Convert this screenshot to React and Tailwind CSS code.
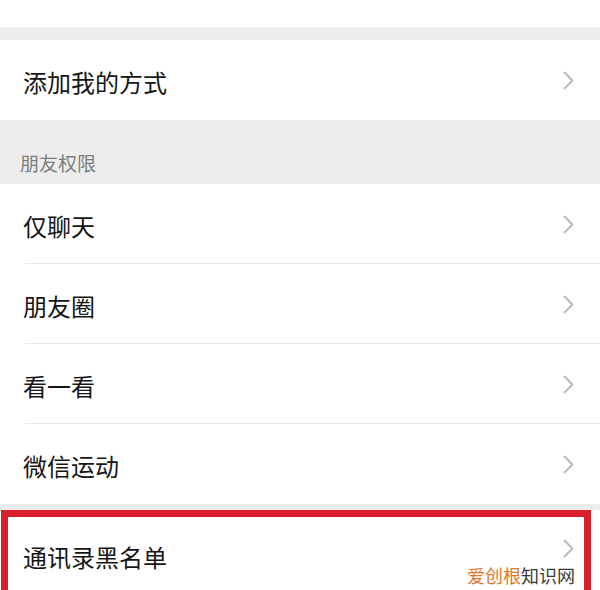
import React from 'react';

const Chevron = () => (
  <svg width="11" height="19" viewBox="0 0 11 19" className="shrink-0">
    <polyline points="1.5,1.5 9.5,9.5 1.5,17.5" fill="none" stroke="#b8b8b8" strokeWidth="1.8" strokeLinecap="round" strokeLinejoin="round" />
  </svg>
);

const Row = ({ label, divider }) => (
  <div className="relative h-[80px] bg-white flex items-center justify-between pl-[23px] pr-[26px]">
    <span className="text-[24px] leading-[24px] text-[#151515] pt-[3px]">{label}</span>
    <Chevron />
    {divider && <div className="absolute left-[25px] right-0 bottom-0 h-px bg-[#e9e9e9]" />}
  </div>
);

export default function App() {
  const permissions = ['仅聊天', '朋友圈', '看一看', '微信运动'];

  return (
    <div
      className="relative w-[600px] h-[590px] overflow-hidden bg-[#ededed]"
      style={{ fontFamily: '"Noto Sans CJK SC", "Noto Sans", sans-serif' }}
    >
      <div className="h-[27px] bg-white" />
      <div className="h-[13px]" />

      <Row label="添加我的方式" />

      {/* section header */}
      <div className="h-[64px] flex items-end pl-[20px] pb-[11px]">
        <span className="text-[19px] leading-[20px] text-[#7d7d7d]">朋友权限</span>
      </div>

      {permissions.map((p, i) => (
        <Row key={p} label={p} divider={i < permissions.length - 1} />
      ))}

      <div className="h-[6px]" />

      <div className="relative h-[80px] bg-white flex items-center justify-between pl-[23px] pr-[26px]">
        <span className="text-[24px] leading-[24px] text-[#151515] pt-[14px]">通讯录黑名单</span>
        <div className="pb-[4px]">
          <Chevron />
        </div>
      </div>

      {/* red highlight box */}
      <div className="absolute left-[1px] top-[510px] w-[590px] h-[90px] border-[7px] border-[#d7202c]" />

      {/* watermark */}
      <div className="absolute left-[467px] top-[564px] text-[18px] leading-[22px] whitespace-nowrap bg-white/60">
        <span className="text-[#e0762a]">爱创根</span>
        <span className="text-[#3a3a3a]">知识网</span>
      </div>
    </div>
  );
}
